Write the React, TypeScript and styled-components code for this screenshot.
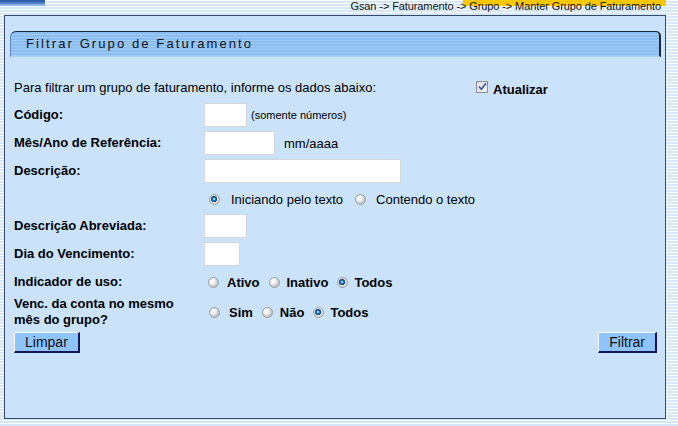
import React from "react";
import styled, { createGlobalStyle } from "styled-components";

const GlobalStyle = createGlobalStyle`
  html, body { margin: 0; padding: 0; }
  body {
    background: repeating-linear-gradient(to bottom, #ffffff 0 1px, #d6e7f8 1px 3px);
    font-family: "Liberation Sans", Arial, sans-serif;
    color: #000;
  }
`;

const Page = styled.div`
  width: 678px;
  height: 426px;
  overflow: hidden;
`;

const Header = styled.header`
  height: 15px;
  display: flex;
  align-items: flex-start;
  justify-content: space-between;
`;

const TabStub = styled.div`
  width: 45px;
  height: 6px;
  background: linear-gradient(to bottom, #2f5fa8 0 2px, #4d7fc4 2px 4px, #8fb3e3 4px 6px);
`;

const Breadcrumb = styled.div`
  margin-right: 12px;
  padding-right: 5px;
  font-size: 11px;
  letter-spacing: -0.1px;
  line-height: 12px;
  height: 12px;
  white-space: nowrap;
  color: #111;
  background: linear-gradient(to right, transparent 113px, #fbc800 113px) no-repeat;
  background-size: 100% 6px;
`;

const Panel = styled.section`
  box-sizing: border-box;
  width: 662px;
  height: 404px;
  margin-left: 4px;
  border: 1px solid #34496a;
  background: #cae3fb;
  display: flex;
  flex-direction: column;
`;

const TitleBar = styled.div`
  box-sizing: border-box;
  height: 26px;
  margin: 15px 4px 0 5px;
  padding-left: 15px;
  border-top: 1px solid #1e2a3c;
  border-right: 2px solid #1e2a3c;
  border-left: 1px solid #5a86bd;
  border-bottom: 1px solid #a9cff5;
  border-top-left-radius: 6px;
  border-top-right-radius: 5px;
  background: repeating-linear-gradient(to bottom, #8cbdf0 0 2px, #9fcbf6 2px 3px);
  font-size: 13px;
  line-height: 24px;
  letter-spacing: 2.1px;
  color: #0e1218;
`;

const Content = styled.div`
  padding: 16px 8px 0 9px;
  display: flex;
  flex-direction: column;
`;

const Row = styled.div<{ $h: number }>`
  height: ${(p) => p.$h}px;
  display: flex;
  align-items: center;
`;

const IntroText = styled.div`
  flex: 0 0 462px;
  font-size: 13px;
`;

const CheckWrap = styled.label`
  display: flex;
  align-items: center;
  gap: 5px;
  margin-top: 4px;
  font-size: 13px;
  font-weight: bold;
`;

const CheckBox = styled.span`
  box-sizing: border-box;
  width: 12px;
  height: 12px;
  border: 1px solid #8a8f99;
  background: linear-gradient(135deg, #dcdcdc, #f6f6f6);
  display: flex;
  align-items: center;
  justify-content: center;
  margin-top: -5px;
`;

const Label = styled.div`
  flex: 0 0 190px;
  font-size: 13px;
  font-weight: bold;
  line-height: 16px;
`;

const TextInput = styled.div<{ $w: number }>`
  box-sizing: border-box;
  width: ${(p) => p.$w}px;
  height: 24px;
  background: #fff;
  border: 1px solid #d3d7dc;
`;

const Hint = styled.span<{ $ml: number; $size: number }>`
  margin-left: ${(p) => p.$ml}px;
  font-size: ${(p) => p.$size}px;
`;

const Options = styled.div<{ $gap: number; $ml: number }>`
  display: flex;
  align-items: center;
  gap: ${(p) => p.$gap}px;
  margin-left: ${(p) => p.$ml}px;
`;

const Option = styled.label<{ $inner: number; $bold?: boolean }>`
  display: flex;
  align-items: center;
  gap: ${(p) => p.$inner}px;
  font-size: 13px;
  font-weight: ${(p) => (p.$bold ? "bold" : "normal")};
`;

const Radio = styled.span<{ $checked?: boolean }>`
  box-sizing: border-box;
  width: 11px;
  height: 11px;
  border-radius: 50%;
  border: 1px solid #9a9ea4;
  background: ${(p) =>
    p.$checked
      ? "radial-gradient(circle at 45% 45%, #8fd0ff 0 0.8px, #1a74c0 1.6px, #0a3c78 2.8px, #f4f4f4 3.3px, #d4d4d4 4.5px)"
      : "radial-gradient(circle at 35% 35%, #ffffff 0 1px, #ebebeb 3px, #c4c4c4 5.5px)"};
`;

const ButtonRow = styled.div`
  margin-top: 3px;
  display: flex;
  justify-content: space-between;
`;

const Button = styled.button`
  box-sizing: border-box;
  height: 21px;
  padding: 0 10px;
  font-family: "Liberation Sans", Arial, sans-serif;
  font-size: 14px;
  line-height: 18px;
  color: #111;
  background: #8ec4fa;
  border-top: 1px solid #ffffff;
  border-left: 1px solid #ffffff;
  border-right: 2px solid #14145a;
  border-bottom: 2px solid #14145a;
  cursor: pointer;
`;

export default function App() {
  return (
    <Page>
      <GlobalStyle />
      <Header>
        <TabStub />
        <Breadcrumb>Gsan -&gt; Faturamento -&gt; Grupo -&gt; Manter Grupo de Faturamento</Breadcrumb>
      </Header>
      <Panel>
        <TitleBar>Filtrar Grupo de Faturamento</TitleBar>
        <Content>
          <Row $h={28}>
            <IntroText>Para filtrar um grupo de faturamento, informe os dados abaixo:</IntroText>
            <CheckWrap>
              <CheckBox>
                <svg width="9" height="9" viewBox="0 0 9 9">
                  <path d="M1 4.6 L3.4 7.2 L8 1.2" fill="none" stroke="#3d55a8" strokeWidth="1.6" />
                </svg>
              </CheckBox>
              Atualizar
            </CheckWrap>
          </Row>
          <Row $h={28}>
            <Label>Código:</Label>
            <TextInput $w={43} />
            <Hint $ml={4} $size={11}>(somente números)</Hint>
          </Row>
          <Row $h={28}>
            <Label>Mês/Ano de Referência:</Label>
            <TextInput $w={71} />
            <Hint $ml={9} $size={13}>mm/aaaa</Hint>
          </Row>
          <Row $h={28}>
            <Label>Descrição:</Label>
            <TextInput $w={197} />
          </Row>
          <Row $h={28}>
            <Label />
            <Options $gap={12} $ml={5}>
              <Option $inner={11}>
                <Radio $checked />
                Iniciando pelo texto
              </Option>
              <Option $inner={10}>
                <Radio />
                Contendo o texto
              </Option>
            </Options>
          </Row>
          <Row $h={26}>
            <Label>Descrição Abreviada:</Label>
            <TextInput $w={43} />
          </Row>
          <Row $h={30}>
            <Label>Dia do Vencimento:</Label>
            <TextInput $w={36} />
          </Row>
          <Row $h={26}>
            <Label>Indicador de uso:</Label>
            <Options $gap={9} $ml={4}>
              <Option $inner={8} $bold>
                <Radio />
                Ativo
              </Option>
              <Option $inner={7} $bold>
                <Radio />
                Inativo
              </Option>
              <Option $inner={6} $bold>
                <Radio $checked />
                Todos
              </Option>
            </Options>
          </Row>
          <Row $h={34}>
            <Label>
              Venc. da conta no mesmo
              <br />
              mês do grupo?
            </Label>
            <Options $gap={9} $ml={5}>
              <Option $inner={9} $bold>
                <Radio />
                Sim
              </Option>
              <Option $inner={7} $bold>
                <Radio />
                Não
              </Option>
              <Option $inner={6} $bold>
                <Radio $checked />
                Todos
              </Option>
            </Options>
          </Row>
          <ButtonRow>
            <Button type="button">Limpar</Button>
            <Button type="button">Filtrar</Button>
          </ButtonRow>
        </Content>
      </Panel>
    </Page>
  );
}
